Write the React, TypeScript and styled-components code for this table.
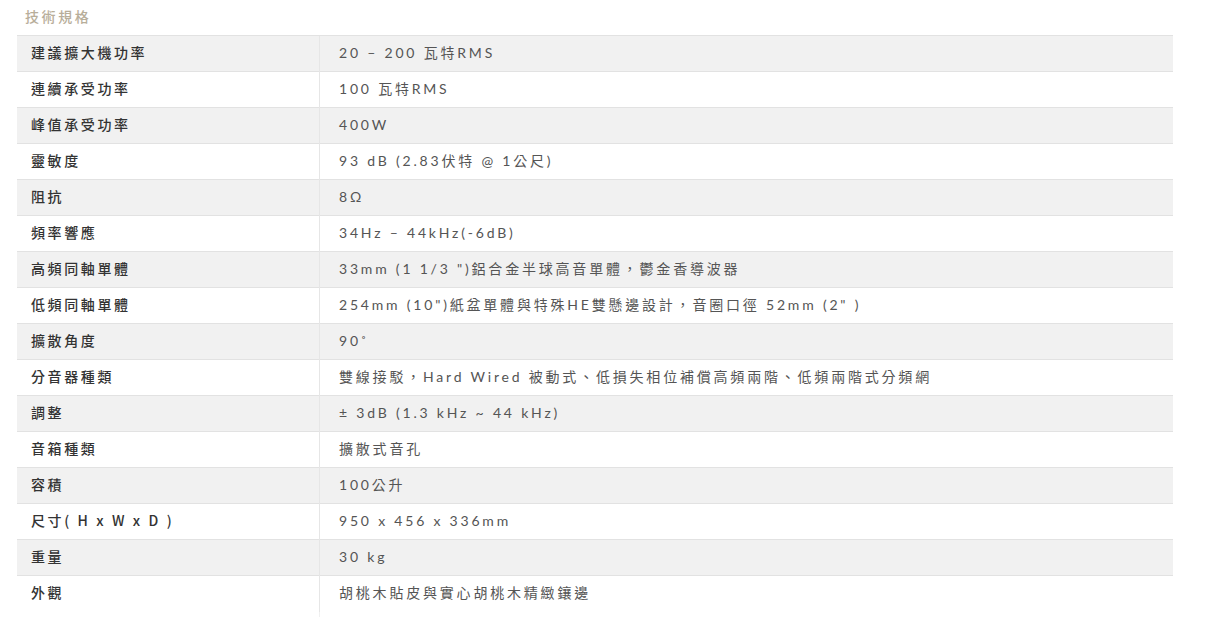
import React from 'react';
import styled, { createGlobalStyle } from 'styled-components';

const GlobalStyle = createGlobalStyle`
    body {
        margin: 0;
        background: #fff;
        font-family: "Lato", "Noto Sans CJK TC", sans-serif;
    }
`

const Page = styled.div`
    padding: 6px 32px 0 17px;
`

const Title = styled.h3`
    margin: 0 0 8px 8px;
    height: 21px;
    font-family: "Noto Sans CJK TC", sans-serif;
    font-size: 14px;
    font-weight: 500;
    letter-spacing: 2.6px;
    line-height: 21px;
    color: #b8ae9a;
`

const Table = styled.table`
    width: 1156px;
    border-collapse: collapse;
    border-spacing: 0;
`

const Row = styled.tr<{ $shaded: boolean }>`
    height: 36px;
    background: ${p => (p.$shaded ? '#f1f1f1' : '#fff')};
`

const Label = styled.td`
    width: 288px;
    padding: 0 0 3px 14px;
    border-top: 1px solid #e2e2e2;
    font-family: "Noto Sans CJK TC", sans-serif;
    font-size: 14px;
    font-weight: 500;
    letter-spacing: 2.6px;
    color: #333;
    white-space: nowrap;
`

const Value = styled.td`
    padding: 0 0 3px 19px;
    border-top: 1px solid #e2e2e2;
    border-left: 1px solid #e6e6e6;
    font-family: "Lato", "Noto Sans CJK TC", sans-serif;
    font-size: 14px;
    font-weight: 400;
    letter-spacing: 2.8px;
    color: #555;
    white-space: nowrap;
`

const Tail = styled.tr`
    height: 5px;

    td:last-child { border-left: 1px solid #f0f0f0; }
`

const specs: [string, string][] = [
    ['建議擴大機功率', '20 – 200 瓦特RMS'],
    ['連續承受功率', '100 瓦特RMS'],
    ['峰值承受功率', '400W'],
    ['靈敏度', '93 dB (2.83伏特 @ 1公尺)'],
    ['阻抗', '8Ω'],
    ['頻率響應', '34Hz – 44kHz(-6dB)'],
    ['高頻同軸單體', '33mm (1 1/3 ")鋁合金半球高音單體，鬱金香導波器'],
    ['低頻同軸單體', '254mm (10")紙盆單體與特殊HE雙懸邊設計，音圈口徑 52mm (2" )'],
    ['擴散角度', '90˚'],
    ['分音器種類', '雙線接駁，Hard Wired 被動式、低損失相位補償高頻兩階、低頻兩階式分頻網'],
    ['調整', '± 3dB (1.3 kHz ~ 44 kHz)'],
    ['音箱種類', '擴散式音孔'],
    ['容積', '100公升'],
    ['尺寸( H x W x D )', '950 x 456 x 336mm'],
    ['重量', '30 kg'],
    ['外觀', '胡桃木貼皮與實心胡桃木精緻鑲邊'],
];

export default function App() {
    return (
        <Page>
            <GlobalStyle />
            <Title>技術規格</Title>
            <Table>
                <tbody>
                    {specs.map(([label, value], index) => (
                        <Row key={label} $shaded={index % 2 === 0}>
                            <Label>{label}</Label>
                            <Value>{value}</Value>
                        </Row>
                    ))}
                    <Tail>
                        <td></td>
                        <td></td>
                    </Tail>
                </tbody>
            </Table>
        </Page>
    );
}
